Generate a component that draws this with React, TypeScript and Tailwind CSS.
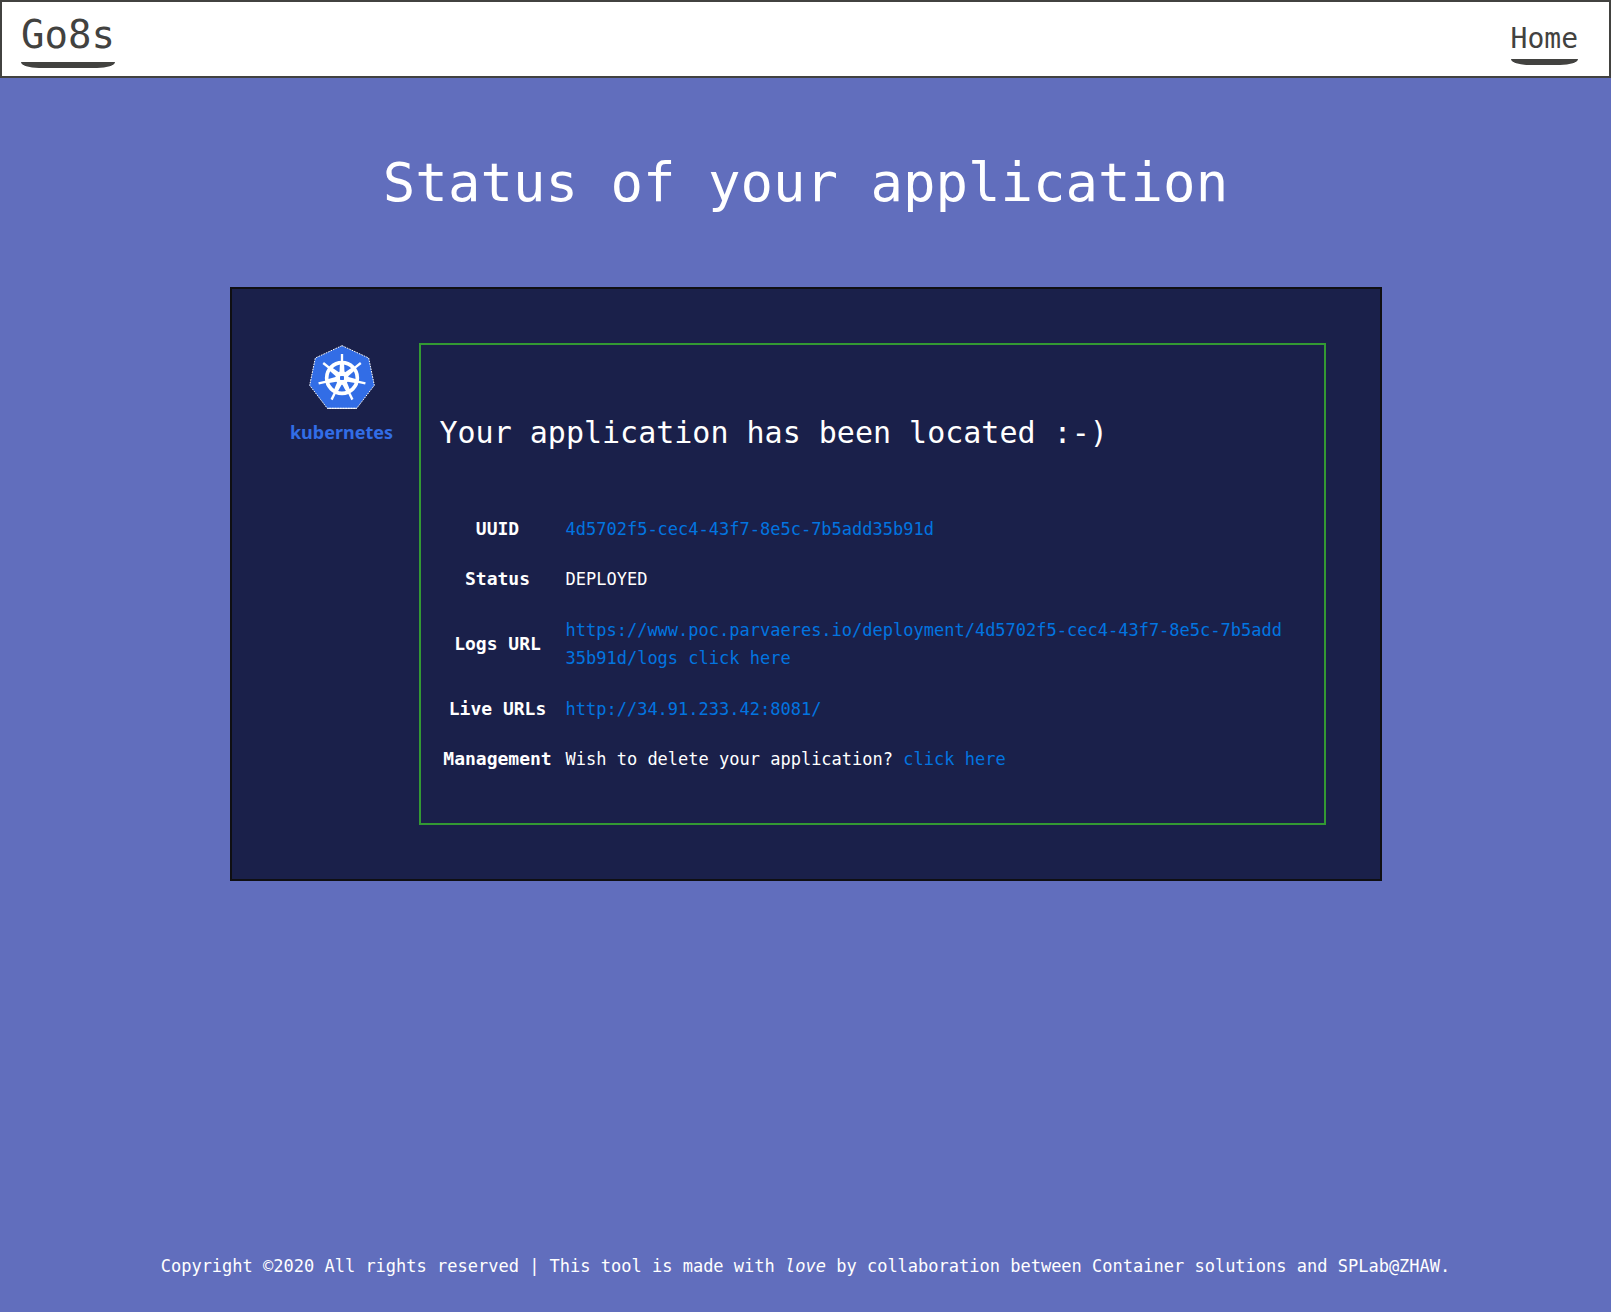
import type { ReactNode } from "react";

const UUID = "4d5702f5-cec4-43f7-8e5c-7b5add35b91d";

const spokes = [0, 1, 2, 3, 4, 5, 6].map((i) => (i * 360) / 7);

function Wheel() {
  return (
    <svg viewBox="0 0 204 198" className="h-[66px] w-[68px]" aria-hidden="true">
      <polygon
        points="102,5 182,42 199,124 146,193 58,193 5,124 22,42"
        fill="#326de6"
        stroke="#fff"
        strokeWidth="3"
        strokeDasharray="5 3"
      />
      <path d="M58 193H146" stroke="#fff" strokeWidth="3" />
      <g stroke="#fff" fill="none">
        <circle cx="102" cy="102" r="46" strokeWidth="11" />
        {spokes.map((a) => (
          <g key={a} transform={`rotate(${a} 102 102)`}>
            <path d="M102 58V30" strokeWidth="7" />
            <path d="M96 56h12l2 36h-16z" fill="#fff" stroke="none" />
          </g>
        ))}
      </g>
      <circle cx="102" cy="102" r="20" fill="#fff" />
      <rect x="96" y="96" width="12" height="12" rx="2" fill="#326de6" />
    </svg>
  );
}

function Underline() {
  return <span className="block h-1.5 bg-[#424240] [border-radius:0_0_18px_18px/0_0_6px_6px]" />;
}

function Row({ label, children, pad = "py-[11px]" }: { label: string; children: ReactNode; pad?: string }) {
  return (
    <tr>
      <th scope="row" className={`w-[116px] text-center align-middle text-[18px] leading-7 font-bold ${pad}`}>
        {label}
      </th>
      <td className={`pr-5 pl-2.5 align-middle break-all ${pad}`}>{children}</td>
    </tr>
  );
}

const link = "text-[#0275e0] hover:underline";

export default function App() {
  return (
    <div className="flex min-h-screen flex-col bg-[#616ebd] font-['DejaVu_Sans_Mono',monospace] text-[17px] leading-7 text-white">
      <header className="flex items-baseline justify-between border-2 border-[#424240] bg-white pt-[11px] pr-[31px] pb-2 pl-[19px] text-[#424240]">
        <a href="#" className="flex flex-col gap-[5px] text-[39px] leading-[44px]">
          Go8s
          <Underline />
        </a>
        <nav>
          <a href="#" className="flex flex-col gap-1 text-[28px] leading-8">
            Home
            <Underline />
          </a>
        </nav>
      </header>

      <main className="flex flex-1 flex-col items-center px-4">
        <h1 className="py-[72px] text-center text-[54px] leading-[65px]">Status of your application</h1>

        <section className="flex w-full max-w-6xl items-start border-2 border-[#0f0f12] bg-[#1a204a] p-[54px]">
          <div className="mr-[21px] flex w-28 shrink-0 flex-col items-center pt-px text-[#326de6]">
            <Wheel />
            <span className="mt-2 font-['Noto_Sans',sans-serif] text-[18px] leading-7 font-bold">kubernetes</span>
          </div>

          <div className="flex-1 border-2 border-[#339933] px-[19px] pt-[70px] pb-[39px]">
            <h2 className="mb-[53px] text-[30px] leading-9">Your application has been located :-)</h2>
            <table className="w-full table-fixed">
              <tbody>
                <Row label="UUID">
                  <a href="#" className={link}>{UUID}</a>
                </Row>
                <Row label="Status">DEPLOYED</Row>
                <Row label="Logs URL" pad="py-3">
                  <a href="#" className={link}>
                    {`https://www.poc.parvaeres.io/deployment/${UUID}/logs click here`}
                  </a>
                </Row>
                <Row label="Live URLs">
                  <a href="#" className={link}>http://34.91.233.42:8081/</a>
                </Row>
                <Row label="Management">
                  Wish to delete your application? <a href="#" className={link}>click here</a>
                </Row>
              </tbody>
            </table>
          </div>
        </section>
      </main>

      <footer className="px-4 pt-8 pb-8 text-center">
        Copyright ©2020 All rights reserved | This tool is made with <em className="italic">love</em> by
        collaboration between Container solutions and SPLab@ZHAW.
      </footer>
    </div>
  );
}
